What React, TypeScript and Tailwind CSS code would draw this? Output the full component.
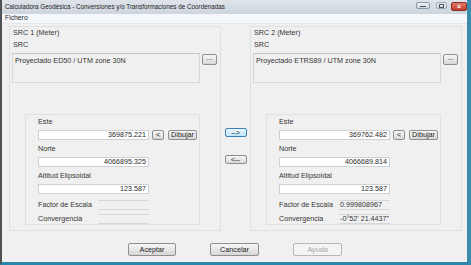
import React from 'react';

const font = { fontFamily: '"Liberation Sans", Arial, sans-serif' };

function Btn({ children, className = '' }: { children: React.ReactNode; className?: string }) {
  return (
    <div
      className={`flex items-center justify-center rounded-[2px] border border-[#8e8f8f] bg-gradient-to-b from-[#f6f6f6] via-[#e8e8e8] to-[#d6d6d6] text-[7.2px] leading-none text-[#1e1e1e] ${className}`}
    >
      {children}
    </div>
  );
}

function Field({ value }: { value: string }) {
  return (
    <div className="flex h-[10px] w-[111px] items-center justify-end border border-[#cdd1d5] bg-white pr-[2px] text-[7.2px] leading-none text-[#2a2a2a]">
      {value}
    </div>
  );
}

interface PanelProps {
  title: string;
  src: string;
  este: string;
  norte: string;
  altitud: string;
  factor: string;
  convergencia: string;
}

function Panel({ title, src, este, norte, altitud, factor, convergencia }: PanelProps) {
  const groups = [
    { label: 'Este', value: este, draw: true },
    { label: 'Norte', value: norte, draw: false },
    { label: 'Altitud Elipsoidal', value: altitud, draw: false },
  ];
  return (
    <div className="flex h-[205px] w-[212px] flex-col border border-[#e0e0e0] pt-[1px] text-[7.2px] text-[#353535]">
      <div className="flex h-[10px] items-center pl-[3px]">{title}</div>
      <div className="mt-[2px] flex h-[10px] items-center pl-[3px]">SRC</div>
      <div className="ml-[2px] mt-[3px] flex">
        <div className="h-[30px] w-[188px] border border-[#d8d8d8] border-t-[#c4c4c4] bg-[#f0f0f0] pl-[2px] pt-[2px] leading-[9px]">
          {src}
        </div>
        <Btn className="ml-[2px] mt-[1px] h-[11px] w-[15px] pb-[3px]">...</Btn>
      </div>
      <div className="ml-[15px] mt-[31px] flex h-[111px] w-[175px] flex-col border border-[#e0e0e0] pl-[12px] pt-[2px]">
        {groups.map((g) => (
          <div key={g.label} className="mb-[4px] flex flex-col">
            <div className="flex h-[10px] items-center">{g.label}</div>
            <div className="mt-[3px] flex items-center">
              <Field value={g.value} />
              {g.draw && (
                <>
                  <Btn className="ml-[3px] h-[10px] w-[12px]">&lt;</Btn>
                  <Btn className="ml-[4px] h-[10px] w-[29px]">Dibujar</Btn>
                </>
              )}
            </div>
          </div>
        ))}
        <div className="mt-[2px] flex h-[11px] items-center">
          <div className="w-[60px]">Factor de Escala</div>
          <div className="flex h-[10px] w-[51px] items-center border-y border-[#d8d8d8] pl-[1px]">{factor}</div>
        </div>
        <div className="mt-[3px] flex h-[11px] items-center">
          <div className="w-[60px]">Convergencia</div>
          <div className="flex h-[10px] w-[51px] items-center whitespace-nowrap border-y border-[#d8d8d8] pl-[1px]">{convergencia}</div>
        </div>
      </div>
    </div>
  );
}

export default function App() {
  return (
    <div
      style={font}
      className="flex h-[265px] w-[471px] flex-col border-b-[3px] border-l-[2px] border-r-[4px] border-b-[#2a87a9] border-l-[#4f5154] border-r-[#3a8cac] bg-[#f0f0f0]"
    >
      {/* title bar */}
      <div className="flex h-[14px] items-center bg-gradient-to-b from-[#dfe4ea] to-[#cdd5dd] pl-[3px] text-[6.3px] text-[#1c1c1c]">
        <span>Calculadora Geodésica - Conversiones y/o Transformaciones de Coordenadas</span>
        <div className="ml-auto flex items-start self-start pt-[2px]">
          <div className="flex h-[7px] w-[14px] items-end justify-center rounded-[2px] border border-[#8b99a7] bg-gradient-to-b from-[#eef2f5] to-[#cdd6de] pb-[1px]">
            <div className="h-[1px] w-[6px] bg-[#4a5560]" />
          </div>
          <div className="ml-[6px] flex h-[7px] w-[11px] items-center justify-center rounded-[2px] border border-[#9aa6b2] bg-gradient-to-b from-[#eef2f5] to-[#d3dbe2]">
            <div className="h-[4px] w-[5px] border border-[#4a5560]" />
          </div>
          <div className="ml-[4px] flex h-[9px] w-[16px] items-center justify-center rounded-[2px] border border-[#8c2c22] bg-gradient-to-b from-[#e0796b] to-[#c0392b] text-[7px] font-bold leading-none text-white">
            ×
          </div>
        </div>
      </div>
      {/* menu bar */}
      <div className="flex h-[10px] items-center border-b border-[#e3e7ec] bg-[#f5f7fa] pl-[3px] text-[6.8px] text-[#1e1e1e]">
        Fichero
      </div>
      {/* client */}
      <div className="flex flex-1 flex-col">
        <div className="ml-[7px] mt-[2px] flex">
          <Panel
            title="SRC 1 (Meter)"
            src="Proyectado ED50 / UTM zone 30N"
            este="369875.221"
            norte="4066895.325"
            altitud="123.587"
            factor=""
            convergencia=""
          />
          <div className="flex w-[29px] flex-col items-center pt-[102px]">
            <div className="flex h-[9px] w-[22px] items-center justify-center rounded-[2px] border border-[#3c7fb1] bg-gradient-to-b from-[#eaf6fd] to-[#bee6fd] text-[7px] leading-none text-[#1e1e1e]">
              --&gt;
            </div>
            <Btn className="mt-[18px] h-[9px] w-[22px]">&lt;--</Btn>
          </div>
          <Panel
            title="SRC 2 (Meter)"
            src="Proyectado ETRS89 / UTM zone 30N"
            este="369762.482"
            norte="4066689.814"
            altitud="123.587"
            factor="0.999808967"
            convergencia={'-0°52\' 21.4437"'}
          />
        </div>
        <div className="mt-[12px] flex">
          <Btn className="ml-[126px] h-[13px] w-[48px]">Aceptar</Btn>
          <Btn className="ml-[34px] h-[13px] w-[49px]">Cancelar</Btn>
          <div className="ml-[34px] flex h-[13px] w-[49px] items-center justify-center rounded-[2px] border border-[#b5b8bb] bg-[#f4f4f4] text-[7.2px] leading-none text-[#a3a3a3]">
            Ayuda
          </div>
        </div>
      </div>
    </div>
  );
}
